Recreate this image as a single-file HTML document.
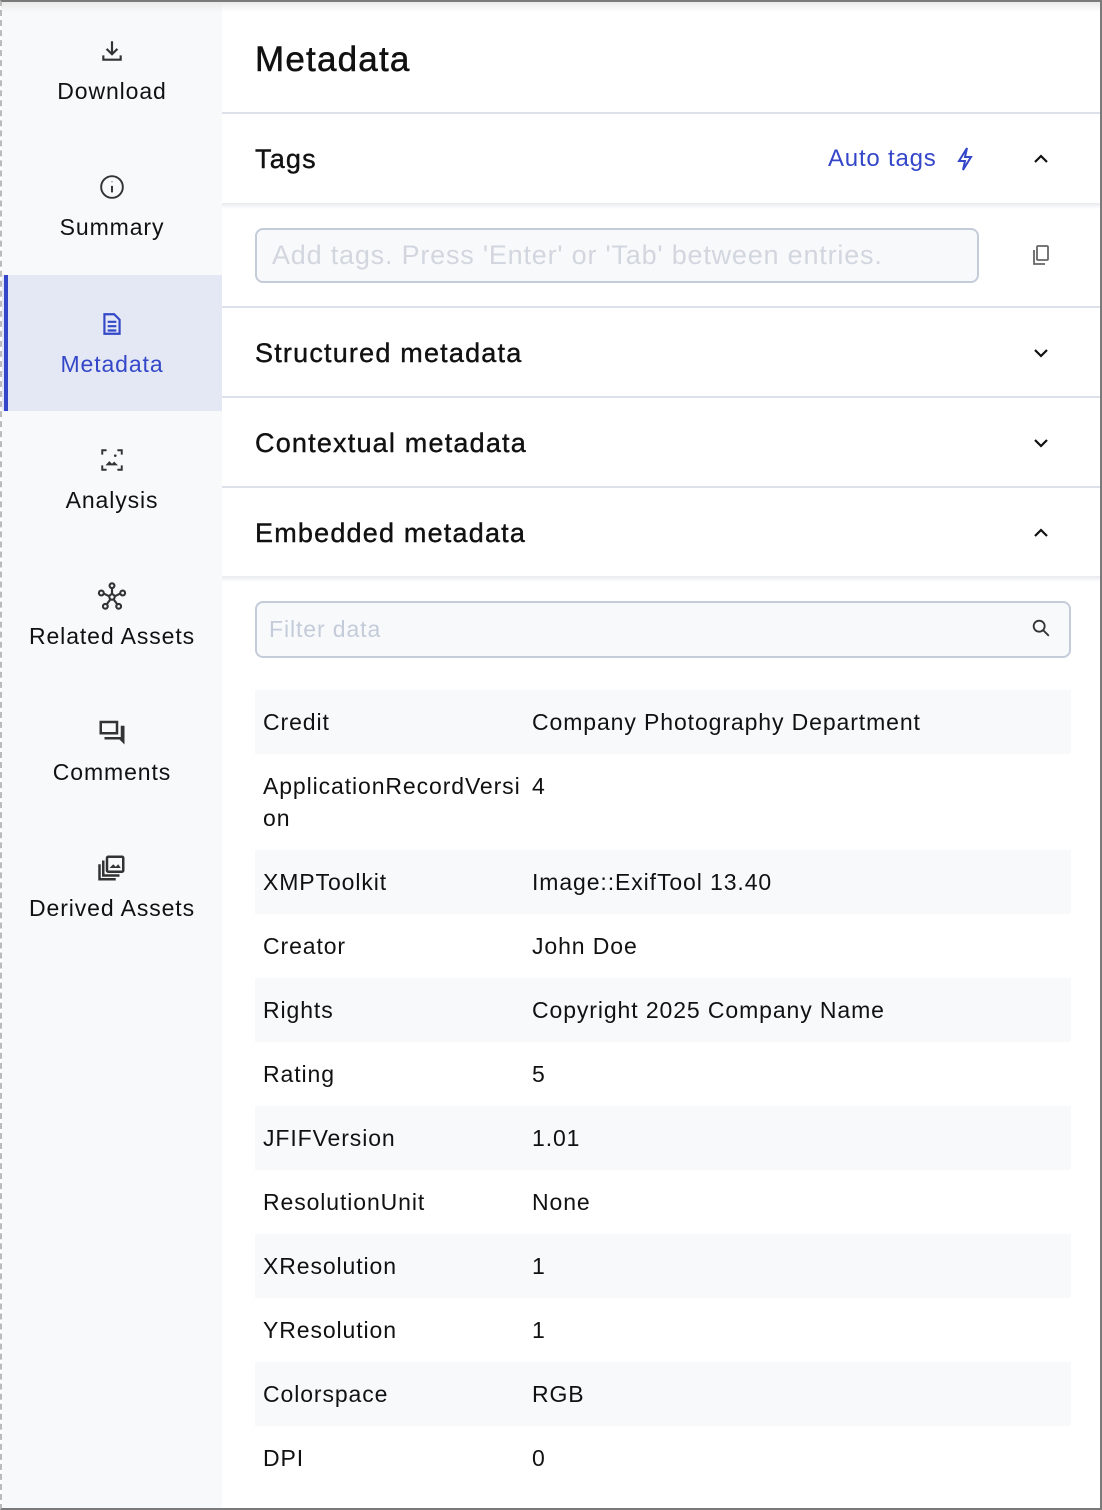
<!DOCTYPE html>
<html><head><meta charset="utf-8"><style>
*{box-sizing:border-box;margin:0;padding:0}
body{width:1102px;height:1510px;overflow:hidden;background:#fff;font-family:"Liberation Sans",sans-serif;color:#111;position:relative}
.frame{position:absolute;inset:0;border:2px solid #7a7a7a;border-left:2px dashed #bbb;pointer-events:none;z-index:10}
.side{position:absolute;left:2px;top:2px;width:220px;height:1506px;background:#f8f9fb}
.item{position:absolute;left:0;width:220px;height:136px;text-align:center}
.item svg{position:absolute;left:97px;width:26px;height:26px}
.item span{position:absolute;left:0;right:0;font-size:23px;color:#111;letter-spacing:.9px}
.active{background:#e3e8f4}
.active:before{content:"";position:absolute;left:2px;top:0;bottom:0;width:4px;background:#3447c9}
.active span{color:#3447c9}
.h{position:absolute;left:222px;right:2px;border-bottom:2px solid #dde1ea}
.sec{position:absolute;left:255px;font-size:27px;color:#111;letter-spacing:1.2px;-webkit-text-stroke:.4px #111}
.chev{position:absolute;left:1031px;width:20px;height:20px}
.row{position:absolute;left:255px;width:816px;height:64px;font-size:23px;letter-spacing:.9px}
.row.s{background:#f8f9fb}
.row .k{position:absolute;left:8px;top:16px;width:265px;line-height:32px}
.row .v{position:absolute;left:277px;top:16px;line-height:32px}
</style></head><body>
<div class="frame"></div>
<div style="position:absolute;left:0;right:0;top:0;height:12px;background:linear-gradient(#e6e6e6,#fff0);z-index:5"></div>
<div class="side">
 <div class="item" style="top:0"><svg style="top:36px" viewBox="0 0 24 24" fill="none" stroke="#333" stroke-width="2"><path d="M12 3v11M7 10l5 5 5-5M4 16v4h16v-4"/></svg><span style="top:76px">Download</span></div>
 <div class="item" style="top:136px"><svg style="top:36px" viewBox="0 0 24 24" fill="none" stroke="#333" stroke-width="1.8"><circle cx="12" cy="12" r="10"/><path d="M12 11v6M12 7v.5"/></svg><span style="top:76px">Summary</span></div>
 <div class="item active" style="top:273px"><svg style="top:36px" viewBox="0 0 24 24" fill="none" stroke="#3447c9" stroke-width="2"><path d="M5 3h9l5 5v13H5zM8 10h8M8 14h8M8 18h8"/></svg><span style="top:76px">Metadata</span></div>
 <div class="item" style="top:409px"><svg style="top:36px" viewBox="0 0 24 24" fill="none" stroke="#333" stroke-width="1.8"><path d="M3 7V3h4M17 3h4v4M21 17v4h-4M7 21H3v-4"/><path d="M6 17l3.5-4 2.5 2.5 2-2 3.5 3.5z" fill="#333" stroke="none"/><circle cx="15" cy="8" r="1.2" fill="#333" stroke="none"/></svg><span style="top:76px">Analysis</span></div>
 <div class="item" style="top:545px"><svg style="top:34px;width:32px;height:32px;left:94px" viewBox="0 0 24 24" fill="none" stroke="#333" stroke-width="1.6"><circle cx="12" cy="12" r="2"/><circle cx="12" cy="3.5" r="1.8"/><circle cx="4" cy="9" r="1.8"/><circle cx="20" cy="9" r="1.8"/><circle cx="7" cy="19" r="1.8"/><circle cx="17" cy="19" r="1.8"/><path d="M12 5v5M6 9.5l4 2M18 9.5l-4 2M8 17.5l3-4M16 17.5l-3-4"/></svg><span style="top:76px">Related Assets</span></div>
 <div class="item" style="top:681px"><svg style="top:34px;width:30px;height:30px;left:95px" viewBox="0 0 24 24" fill="#333"><path d="M2 3h15v11H2zM4 5v7h11V5z"/><path d="M19 7h3v15l-4-4H6v-2h13z"/></svg><span style="top:76px">Comments</span></div>
 <div class="item" style="top:817px"><svg style="top:34px;width:30px;height:30px;left:95px" viewBox="0 0 24 24" fill="none" stroke="#333" stroke-width="2"><rect x="8" y="3" width="13" height="12" rx="1"/><path d="M5 6v12h13M2 9v12h13"/><path d="M10 12l3-3 2 2 2-2 2 3z" fill="#333" stroke="none"/></svg><span style="top:76px">Derived Assets</span></div>
</div>

<div style="position:absolute;left:255px;top:40px;font-size:35px;color:#111;letter-spacing:1.2px;-webkit-text-stroke:.5px #111">Metadata</div>
<div class="h" style="top:112px"></div>
<div class="sec" style="top:144px">Tags</div>
<div style="position:absolute;left:828px;top:145px;font-size:24px;color:#3447c9;letter-spacing:.8px">Auto tags</div>
<svg style="position:absolute;left:955px;top:146px;width:20px;height:26px" viewBox="0 0 20 26" fill="none" stroke="#3447c9" stroke-width="2"><path d="M12 2L4 15h6l-2 9 8-13h-6z"/></svg>
<svg class="chev" style="top:149px" viewBox="0 0 20 20" fill="none" stroke="#111" stroke-width="2.2"><path d="M4 13l6-6 6 6"/></svg>
<div style="position:absolute;left:222px;right:2px;top:203px;height:6px;background:linear-gradient(#e8eaee,#fff)"></div>
<div style="position:absolute;left:255px;top:228px;width:724px;height:55px;border:2px solid #c4cbd9;border-radius:8px;background:#f8f9fb;font-size:27px;color:#d2d6de;padding:10px 15px;letter-spacing:.8px;white-space:nowrap;overflow:hidden">Add tags. Press 'Enter' or 'Tab' between entries.</div>
<svg style="position:absolute;left:1029px;top:243px;width:24px;height:24px" viewBox="0 0 24 24" fill="none" stroke="#666" stroke-width="1.8"><rect x="8" y="3" width="11" height="14" rx="1"/><path d="M5 7v14h11"/></svg>
<div class="h" style="top:306px"></div>
<div class="sec" style="top:338px">Structured metadata</div>
<svg class="chev" style="top:343px" viewBox="0 0 20 20" fill="none" stroke="#111" stroke-width="2.2"><path d="M4 7l6 6 6-6"/></svg>
<div class="h" style="top:396px"></div>
<div class="sec" style="top:428px">Contextual metadata</div>
<svg class="chev" style="top:433px" viewBox="0 0 20 20" fill="none" stroke="#111" stroke-width="2.2"><path d="M4 7l6 6 6-6"/></svg>
<div class="h" style="top:486px"></div>
<div class="sec" style="top:518px">Embedded metadata</div>
<svg class="chev" style="top:523px" viewBox="0 0 20 20" fill="none" stroke="#111" stroke-width="2.2"><path d="M4 13l6-6 6 6"/></svg>
<div style="position:absolute;left:222px;right:2px;top:576px;height:6px;background:linear-gradient(#e8eaee,#fff)"></div>
<div style="position:absolute;left:255px;top:601px;width:816px;height:57px;border:2px solid #c4cbd9;border-radius:8px;background:#f8f9fb;font-size:23px;color:#c4cbd9;padding:13px 12px;letter-spacing:.9px">Filter data</div>
<svg style="position:absolute;left:1030px;top:617px;width:22px;height:22px" viewBox="0 0 24 24" fill="none" stroke="#333" stroke-width="2"><circle cx="10" cy="10" r="6"/><path d="M14.5 14.5l6 6"/></svg>

<div class="row s" style="top:690px"><div class="k">Credit</div><div class="v">Company Photography Department</div></div>
<div class="row" style="top:754px;height:96px"><div class="k">ApplicationRecordVersi<br>on</div><div class="v">4</div></div>
<div class="row s" style="top:850px"><div class="k">XMPToolkit</div><div class="v">Image::ExifTool 13.40</div></div>
<div class="row" style="top:914px"><div class="k">Creator</div><div class="v">John Doe</div></div>
<div class="row s" style="top:978px"><div class="k">Rights</div><div class="v">Copyright 2025 Company Name</div></div>
<div class="row" style="top:1042px"><div class="k">Rating</div><div class="v">5</div></div>
<div class="row s" style="top:1106px"><div class="k">JFIFVersion</div><div class="v">1.01</div></div>
<div class="row" style="top:1170px"><div class="k">ResolutionUnit</div><div class="v">None</div></div>
<div class="row s" style="top:1234px"><div class="k">XResolution</div><div class="v">1</div></div>
<div class="row" style="top:1298px"><div class="k">YResolution</div><div class="v">1</div></div>
<div class="row s" style="top:1362px"><div class="k">Colorspace</div><div class="v">RGB</div></div>
<div class="row" style="top:1426px"><div class="k">DPI</div><div class="v">0</div></div>
</body></html>
